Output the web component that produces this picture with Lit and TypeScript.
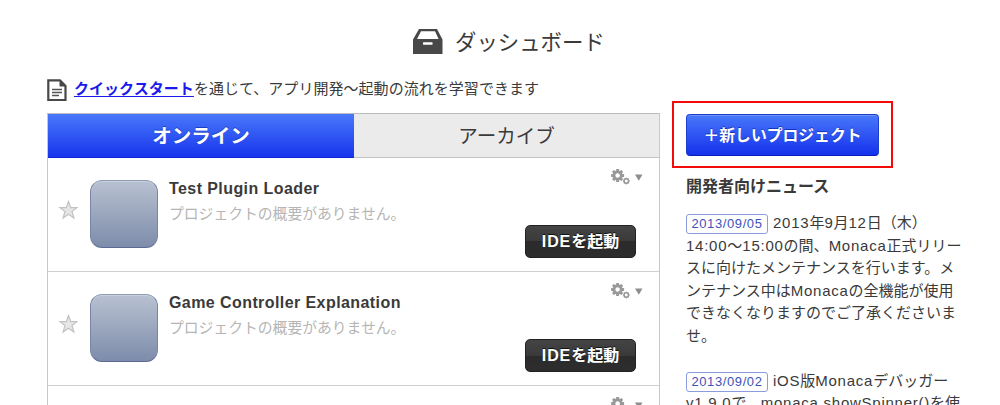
import { LitElement, html, svg, css } from "lit";
import { customElement, property } from "lit/decorators.js";

const gearTeeth = [0, 45, 90, 135, 180, 225, 270, 315];

@customElement("project-row")
class ProjectRow extends LitElement {
  @property() name = "";
  @property() summary = "";

  static styles = css`
    :host {
      display: grid;
      grid-template-columns: 42px 68px 1fr 111px;
      box-sizing: border-box;
      height: 114px;
      border-bottom: 1px solid #cfcfcf;
      padding-right: 23px;
      background: #fff;
    }
    .star { margin: 42px 0 0 10px; width: 20px; height: 20px; }
    .thumb {
      box-sizing: border-box;
      width: 68px;
      height: 68px;
      margin-top: 22px;
      border-radius: 12px;
      border: 1px solid #7985a8;
      border-top-color: #8e9bb3;
      border-bottom-color: #5d6993;
      background: linear-gradient(#b8c1d1, #7d8caa);
      box-shadow: inset 0 1px 0 #c8d2de;
    }
    .text { padding: 19px 0 0 11px; white-space: nowrap; }
    .name {
      font: bold 16px/24px "Liberation Sans", "Noto Sans CJK JP", sans-serif;
      letter-spacing: 0.42px;
      color: #3a3a3a;
    }
    .summary {
      font: 14.8px/24px "Noto Sans CJK JP", sans-serif;
      color: #b5b5b5;
    }
    .side { display: flex; flex-direction: column; }
    .tools { display: flex; margin: 10px 0 0 85px; height: 20px; width: 34px; }
    .launch {
      box-sizing: border-box;
      height: 33px;
      margin-top: 37px;
      border: 1px solid #222;
      border-radius: 5px;
      background: linear-gradient(#444 0, #3a3a3a 50%, #2b2b2b 50%, #2d2d2d 100%);
      color: #fff;
      font: bold 16px/32px "Liberation Sans", "Noto Sans CJK JP", sans-serif;
      text-align: center;
      white-space: nowrap;
      text-shadow: 0 -1px 0 #111;
    }
    .latin { letter-spacing: 0.9px; }
  `;

  render() {
    return html`
      <svg class="star" viewBox="0 0 20 20">
        <path d="M10.5 1.5 12.7 7.6H19L14 11.5 15.9 18 10.5 14.2 5.1 18 7 11.5 2 7.6H8.3Z"
          fill="#e6e6e6" stroke="#c2c2c2" stroke-width="1.2" />
      </svg>
      <div class="thumb"></div>
      <div class="text">
        <div class="name">${this.name}</div>
        <div class="summary">${this.summary}</div>
      </div>
      <div class="side">
        <svg class="tools" viewBox="0 0 34 20">
          <g fill="#999">
            ${gearTeeth.map((a) => svg`<rect x="6.1" y="1" width="3" height="4" rx=".5" transform="rotate(${a} 7.6 7.5)" />`)}
            ${gearTeeth.map((a) => svg`<rect x="15.7" y="9.6" width="1.2" height="1.6" transform="rotate(${a} 16.3 13)" />`)}
          </g>
          <circle cx="7.6" cy="7.5" r="3.7" fill="none" stroke="#999" stroke-width="2.7" />
          <circle cx="16.3" cy="13" r="2.2" fill="none" stroke="#999" stroke-width="1.5" />
          <path d="M25 6.6h7.5L28.8 12.8Z" fill="#8e8e8e" />
        </svg>
        <div class="launch"><span class="latin">IDE</span>を起動</div>
      </div>
    `;
  }
}

@customElement("app-root")
class AppRoot extends LitElement {
  static styles = css`
    :host {
      display: block;
      height: 405px;
      overflow: hidden;
      background: #fff;
      color: #3a3a3a;
      font: 15px/22.5px "Liberation Sans", "Noto Sans CJK JP", sans-serif;
    }
    .title {
      display: flex;
      align-items: center;
      height: 28px;
      padding: 27px 0 0 413px;
      gap: 12px;
      font: 21.4px/28px "Noto Sans CJK JP", sans-serif;
    }
    .columns { display: grid; grid-template-columns: 613px 1fr; padding-left: 47px; }
    .intro {
      display: flex;
      height: 24px;
      margin-top: 21px;
      font: 15px/24px "Noto Sans CJK JP", sans-serif;
      letter-spacing: 0.04px;
      white-space: nowrap;
    }
    .intro svg { margin: 3px 7px 0 0; }
    .intro a { color: #1a1aee; font-weight: bold; text-decoration: underline; text-underline-offset: 2px; text-decoration-thickness: 1px; }
    .panel { margin-top: 13px; border: 1px solid #c8c8c8; border-top-color: #bbb; }
    .tabs { display: grid; grid-template-columns: 306px 1fr; height: 44px; }
    .tab { box-sizing: border-box; text-align: center; font: 19.5px/41px "Noto Sans CJK JP", sans-serif; background: #ebebeb; border-bottom: 1px solid #c4c4c4; }
    .active { background: linear-gradient(#4878fa, #1735ec); color: #fff; font-weight: bold; border-bottom-color: #1029d4; text-shadow: 0 -1px 0 #1c3fc0; }
    .side { padding: 46px 0 0 12px; }
    .callout { box-sizing: border-box; width: 221px; height: 67px; border: 2px solid #f50a0a; padding: 11px 12px; }
    .create {
      box-sizing: border-box;
      width: 193px;
      height: 42px;
      border: 1px solid #1c3ecf;
      border-bottom-color: #0c1cb8;
      border-radius: 4px;
      background: linear-gradient(#4878fa, #1531ec);
      box-shadow: inset 0 1px 0 #6b92fc;
      color: #fff;
      font: bold 15.8px/40px "Noto Sans CJK JP", sans-serif;
      text-align: center;
      white-space: nowrap;
      text-shadow: 0 -1px 0 #1735b8;
    }
    .heading { margin: 5px 0 0 14px; font: bold 16px/24px "Noto Sans CJK JP", sans-serif; }
    .news { margin: 15px 0 0 14px; white-space: nowrap; }
    .news + .news { margin-top: 22px; }
    .line { height: 22.6px; line-height: 22.6px; }
    .l { letter-spacing: 0.75px; }
    .date {
      display: inline-block;
      box-sizing: border-box;
      width: 82px;
      height: 20px;
      border: 1px solid #8b9be0;
      border-radius: 3px;
      color: #3d52b8;
      font-size: 13px;
      line-height: 18px;
      letter-spacing: 0.6px;
      text-align: center;
      margin-right: 5px;
    }
  `;

  render() {
    const summary = "プロジェクトの概要がありません。";
    return html`
      <div class="title">
        <svg width="30" height="27" viewBox="0 0 30 27">
          <path fill="#484848" fill-rule="evenodd"
            d="M6 1H24L29.5 11.5V26H0V11.5ZM8 3.2 4 11H25.6L22 3.2ZM10.6 14.2Q10 14.2 10 15V16Q10 16.8 10.6 16.8H19Q19.6 16.8 19.6 16V15Q19.6 14.2 19 14.2Z" />
        </svg>
        <span>ダッシュボード</span>
      </div>
      <div class="columns">
        <div>
          <div class="intro">
            <svg width="20" height="23" viewBox="0 0 20 23">
              <path d="M1.3 1.3H13L18.5 7V21H1.3Z" fill="#fff" stroke="#484848" stroke-width="2.2" />
              <path d="M12.5 1V7.5H19Z" fill="#484848" />
              <path d="M5 10.5H15M5 13.5H15M5 16.5H12" stroke="#555" stroke-width="1.3" />
            </svg>
            <a>クイックスタート</a><span>を通じて、アプリ開発〜起動の流れを学習できます</span>
          </div>
          <div class="panel">
            <div class="tabs">
              <div class="tab active">オンライン</div>
              <div class="tab">アーカイブ</div>
            </div>
            <project-row name="Test Plugin Loader" summary=${summary}></project-row>
            <project-row name="Game Controller Explanation" summary=${summary}></project-row>
            <project-row name="" summary=""></project-row>
          </div>
        </div>
        <div class="side">
          <div class="callout"><div class="create">＋新しいプロジェクト</div></div>
          <div class="heading">開発者向けニュース</div>
          <div class="news">
            <div class="line"><span class="date">2013/09/05</span><span class="l">2013</span>年<span class="l">9</span>月<span class="l">12</span>日（木）</div>
            <div class="line"><span class="l">14:00</span>〜<span class="l">15:00</span>の間、<span class="l">Monaca</span>正式リリー</div>
            <div class="line">スに向けたメンテナンスを行います。メ</div>
            <div class="line">ンテナンス中は<span class="l">Monaca</span>の全機能が使用</div>
            <div class="line">できなくなりますのでご了承くださいま</div>
            <div class="line">せ。</div>
          </div>
          <div class="news">
            <div class="line"><span class="date">2013/09/02</span><span class="l">iOS</span>版<span class="l">Monaca</span>デバッガー</div>
            <div class="line"><span class="l">v1.9.0</span>で、<span class="l">monaca.showSpinner()</span>を使</div>
          </div>
        </div>
      </div>
    `;
  }
}
